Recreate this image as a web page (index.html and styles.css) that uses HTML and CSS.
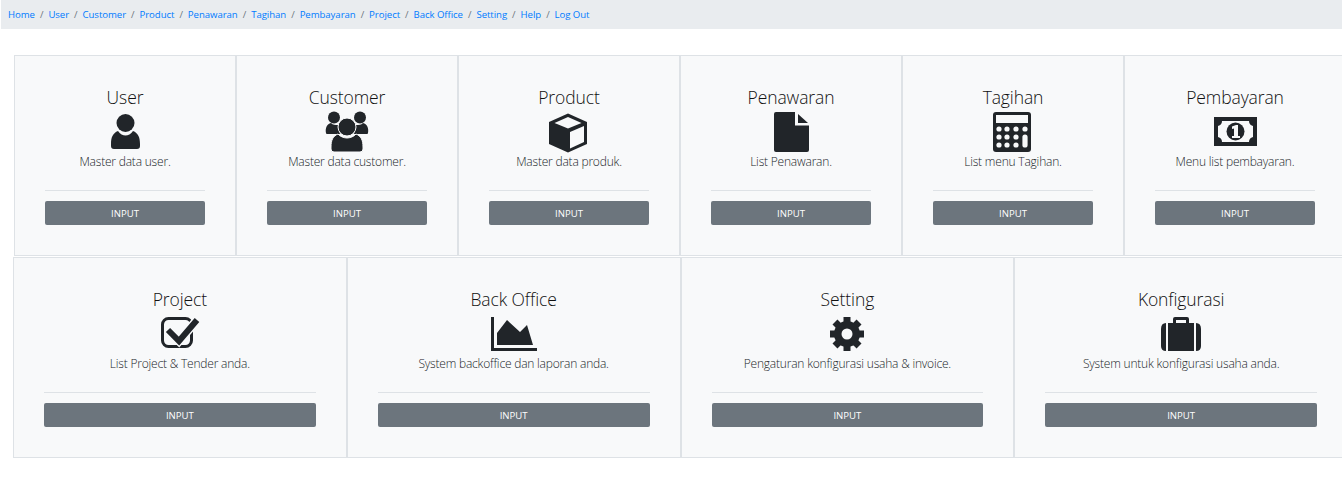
FILE: index.html
```html
<!DOCTYPE html>
<html lang="en">
<head>
  <meta charset="UTF-8" />
  <meta name="viewport" content="width=device-width, initial-scale=1" />
  <title>Menu</title>
  <link rel="stylesheet" href="styles.css">
</head>
<body>
  <nav class="crumbs">
    <a href="#">Home</a><span>/</span>
    <a href="#">User</a><span>/</span>
    <a href="#">Customer</a><span>/</span>
    <a href="#">Product</a><span>/</span>
    <a href="#">Penawaran</a><span>/</span>
    <a href="#">Tagihan</a><span>/</span>
    <a href="#">Pembayaran</a><span>/</span>
    <a href="#">Project</a><span>/</span>
    <a href="#">Back Office</a><span>/</span>
    <a href="#">Setting</a><span>/</span>
    <a href="#">Help</a><span>/</span>
    <a href="#">Log Out</a>
  </nav>

  <div class="deck deck-six">
    <section class="card">
      <h2>User</h2>
      <svg class="icon" viewBox="0 0 48 42">
        <circle cx="24.5" cy="12" r="9" />
        <path d="M10 33C10 26 12 22 17 20C19 23 22 24.5 24.5 24.5C27 24.5 30 23 32 20C37 22 39 26 39 33V35Q39 38 36 38H13Q10 38 10 35Z" />
      </svg>
      <p>Master data user.</p>
      <hr>
      <button class="btn">INPUT</button>
    </section>

    <section class="card">
      <h2>Customer</h2>
      <svg class="icon" viewBox="0 0 48 42">
        <circle cx="11" cy="6.5" r="6" />
        <circle cx="37" cy="6.5" r="6" />
        <path d="M3 22C2 17 4 13 8 12C10 14 12 14 15 14L17 23H4Q3 23 3 22Z" />
        <path d="M45 22C46 17 44 13 40 12C38 14 36 14 33 14L31 23H44Q45 23 45 22Z" />
        <circle class="ring" cx="24" cy="16" r="9" />
        <path class="ring" d="M8 36C8 29 10 25 15 23C17 25.500 21 27 24 27C27 27 31 25.500 33 23C38 25 40 29 40 36V38Q40 41 37 41H11Q8 41 8 38Z" />
      </svg>
      <p>Master data customer.</p>
      <hr>
      <button class="btn">INPUT</button>
    </section>

    <section class="card">
      <h2>Product</h2>
      <svg class="icon" viewBox="0 0 48 42">
        <path d="M23 2.500L42 11V33L23 41.500L4 33V11Z" />
        <path class="cut" d="M23 6L36.500 12L23 17.500L9.500 12Z" />
        <path class="cut" d="M25 21L39 15V31L25 37.500Z" />
      </svg>
      <p>Master data produk.</p>
      <hr>
      <button class="btn">INPUT</button>
    </section>

    <section class="card">
      <h2>Penawaran</h2>
      <svg class="icon" viewBox="0 0 48 42">
        <path d="M9 1H28V14.500H42V39Q42 41 40 41H9Q7 41 7 39V3Q7 1 9 1Z" />
        <path d="M31 3L41 12H31Z" />
      </svg>
      <p>List Penawaran.</p>
      <hr>
      <button class="btn">INPUT</button>
    </section>

    <section class="card">
      <h2>Tagihan</h2>
      <svg class="icon" viewBox="0 0 48 42">
        <rect x="4" y="1" width="38" height="40" rx="3" />
        <rect class="cut" x="7" y="4" width="32" height="8" />
        <g class="cut">
          <circle cx="10" cy="18" r="2.600" />
          <circle cx="18" cy="18" r="2.600" />
          <circle cx="27" cy="18" r="2.600" />
          <circle cx="36" cy="18" r="2.600" />
          <circle cx="10" cy="26" r="2.600" />
          <circle cx="18" cy="26" r="2.600" />
          <circle cx="27" cy="26" r="2.600" />
          <circle cx="10" cy="34" r="2.600" />
          <circle cx="18" cy="34" r="2.600" />
          <circle cx="27" cy="34" r="2.600" />
          <rect x="33.400" y="23.400" width="5.200" height="13.200" rx="2.600" />
        </g>
      </svg>
      <p>List menu Tagihan.</p>
      <hr>
      <button class="btn">INPUT</button>
    </section>

    <section class="card">
      <h2>Pembayaran</h2>
      <svg class="icon" viewBox="0 0 48 42">
        <rect x="3" y="6" width="43" height="29" />
        <path class="cut" d="M11 10H38Q38 14 42 15V26Q38 27 38 31H11Q11 27 7 26V15Q11 14 11 10Z" />
        <circle cx="24.500" cy="20.500" r="9" />
        <path class="cut" d="M21 15.500L25 14H27V25H29V27H21V25H23V17.500L21 18Z" />
      </svg>
      <p>Menu list pembayaran.</p>
      <hr>
      <button class="btn">INPUT</button>
    </section>
  </div>

  <div class="deck deck-four">
    <section class="card">
      <h2>Project</h2>
      <svg class="icon" viewBox="0 0 48 42">
        <rect class="line" x="6.500" y="5.500" width="29" height="28" rx="6" />
        <path class="halo" d="M12 17L23 28L41 7" />
        <path class="tick" d="M12 17L23 28L41 7" />
      </svg>
      <p>List Project &amp; Tender anda.</p>
      <hr>
      <button class="btn">INPUT</button>
    </section>

    <section class="card">
      <h2>Back Office</h2>
      <svg class="icon" viewBox="0 0 48 42">
        <path d="M1 4H4V35H47V38H1Z" />
        <path d="M7 32V20L17 7L30 19L37 12L43 32Z" />
      </svg>
      <p>System backoffice dan laporan anda.</p>
      <hr>
      <button class="btn">INPUT</button>
    </section>

    <section class="card">
      <h2>Setting</h2>
      <svg class="icon" viewBox="0 0 48 42">
        <g transform="translate(24 21)">
          <circle r="13" />
          <rect x="-3.500" y="-17" width="7" height="34" />
          <rect x="-3.500" y="-17" width="7" height="34" transform="rotate(45)" />
          <rect x="-3.500" y="-17" width="7" height="34" transform="rotate(90)" />
          <rect x="-3.500" y="-17" width="7" height="34" transform="rotate(135)" />
          <circle class="cut" r="5.500" />
        </g>
      </svg>
      <p>Pengaturan konfigurasi usaha &amp; invoice.</p>
      <hr>
      <button class="btn">INPUT</button>
    </section>

    <section class="card">
      <h2>Konfigurasi</h2>
      <svg class="icon" viewBox="0 0 48 42">
        <path d="M16 10V6Q16 4 18 4H30Q32 4 32 6V10H29V7H19V10Z" />
        <path d="M4 16Q4 10 9 10V38Q4 38 4 33Z" />
        <rect x="11" y="10" width="26" height="28" />
        <path d="M44 16Q44 10 39 10V38Q44 38 44 33Z" />
      </svg>
      <p>System untuk konfigurasi usaha anda.</p>
      <hr>
      <button class="btn">INPUT</button>
    </section>
  </div>
</body>
</html>
```

FILE: styles.css
```css
* {
  box-sizing: border-box;
}
html, body {
  margin: 0;
  padding: 0;
  overflow-x: hidden;
}
body {
  font-family: 'Open Sans', sans-serif;
  font-weight: 300;
  color: #212529;
  background: #fff;
}
.crumbs {
  display: flex;
  align-items: center;
  gap: 5px;
  height: 29px;
  margin: 0 0 26px 1px;
  padding: 0 7px;
  background-color: #e9ecef;
  font-size: 9.600px;
  font-weight: 400;
  letter-spacing: -0.05px;
}
.crumbs a {
  color: #007bff;
  text-decoration: none;
}
.crumbs span {
  color: #6c757d;
}
.deck {
  display: grid;
}
.deck-six {
  grid-template-columns: repeat(6, 222px);
  margin-left: 14px;
  margin-bottom: 1px;
  width: 1332px;
}
.deck-four {
  grid-template-columns: repeat(4, 333.750px);
  margin-left: 13px;
  width: 1335px;
}
.card {
  height: 201px;
  padding: 30px;
  background-color: #f8f9fa;
  border: 1px solid #dee2e6;
  text-align: center;
}
.card h2 {
  margin: 0 0 3px;
  font-size: 17.500px;
  line-height: 22px;
  font-weight: 300;
  letter-spacing: -0.1px;
  color: #111;
}
.card p {
  margin: 0;
  font-size: 12px;
  line-height: 17px;
  letter-spacing: -0.2px;
}
.card hr {
  margin: 20px 0 10px;
  border: none;
  border-top: 1px solid #dee2e6;
}
.icon {
  display: block;
  width: 48px;
  height: 42px;
  margin: 0 auto;
  fill: #212529;
}
.icon .cut {
  fill: #f8f9fa;
}
.icon .ring {
  stroke: #f8f9fa;
  stroke-width: 1;
}
.icon .line {
  fill: none;
  stroke: #212529;
  stroke-width: 3;
}
.icon .halo {
  fill: none;
  stroke: #f8f9fa;
  stroke-width: 9;
}
.icon .tick {
  fill: none;
  stroke: #212529;
  stroke-width: 6;
}
.btn {
  display: block;
  width: 100%;
  height: 24px;
  padding: 0;
  border: none;
  border-radius: 2px;
  background-color: #6c757d;
  color: #fff;
  font-family: inherit;
  font-size: 9.600px;
  font-weight: 400;
}
```
